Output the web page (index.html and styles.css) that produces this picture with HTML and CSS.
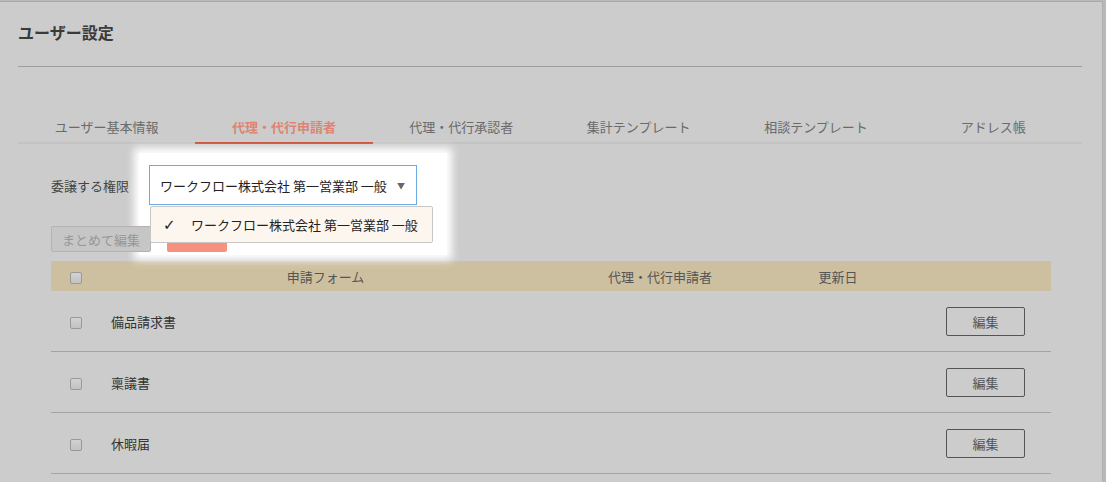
FILE: index.html
```html
<!DOCTYPE html>
<html lang="ja">
<head>
    <meta charset="UTF-8">
    <title>ユーザー設定</title>
    <link rel="stylesheet" href="styles.css">
</head>
<body>
    <div class="card">
        <h1 class="title">ユーザー設定</h1>
        <div class="tabs">
            <div class="tab">ユーザー基本情報</div>
            <div class="tab active">代理・代行申請者</div>
            <div class="tab">代理・代行承認者</div>
            <div class="tab">集計テンプレート</div>
            <div class="tab">相談テンプレート</div>
            <div class="tab">アドレス帳</div>
        </div>
        <div class="panel">
            <div class="spotlight"></div>
            <div class="form-row">
                <label class="label">委譲する権限</label>
                <div class="select-wrap">
                    <div class="select">
                        <span>ワークフロー株式会社 第一営業部 一般</span>
                        <span class="arrow">▼</span>
                    </div>
                    <div class="menu">
                        <div class="option"><span class="check">✓</span>ワークフロー株式会社 第一営業部 一般</div>
                    </div>
                </div>
            </div>
            <div class="actions">
                <button class="btn btn-bulk">まとめて編集</button>
                <button class="btn btn-add"></button>
            </div>
            <table class="list">
                <thead>
                    <tr>
                        <th class="col-check"><span class="checkbox"></span></th>
                        <th class="col-name">申請フォーム</th>
                        <th class="col-proxy">代理・代行申請者</th>
                        <th class="col-date">更新日</th>
                        <th class="col-edit"></th>
                    </tr>
                </thead>
                <tbody>
                    <tr>
                        <td class="col-check"><span class="checkbox"></span></td>
                        <td class="name">備品請求書</td>
                        <td></td>
                        <td></td>
                        <td class="col-edit"><button class="edit">編集</button></td>
                    </tr>
                    <tr>
                        <td class="col-check"><span class="checkbox"></span></td>
                        <td class="name">稟議書</td>
                        <td></td>
                        <td></td>
                        <td class="col-edit"><button class="edit">編集</button></td>
                    </tr>
                    <tr>
                        <td class="col-check"><span class="checkbox"></span></td>
                        <td class="name">休暇届</td>
                        <td></td>
                        <td></td>
                        <td class="col-edit"><button class="edit">編集</button></td>
                    </tr>
                </tbody>
            </table>
        </div>
    </div>
</body>
</html>
```

FILE: styles.css
```css
body {
    margin: 0;
    background: #b8b8b8;
    font-family: "Noto Sans CJK JP", "Noto Sans", sans-serif;
    font-size: 13px;
    color: #333;
    overflow: hidden;
}
.card {
    width: 1103px;
    height: 482px;
    margin-top: 1px;
    background: #cccccc;
    border-top: 1px solid #a9a9a9;
    border-right: 1px solid #b0b0b0;
    padding: 0 20px 0 18px;
    box-sizing: border-box;
}
.title {
    margin: 0;
    height: 65px;
    padding-top: 18px;
    box-sizing: border-box;
    font-size: 16px;
    line-height: 24px;
    font-weight: bold;
    color: #3a3a3a;
    border-bottom: 1px solid #9e9e9e;
}
.tabs {
    display: flex;
    margin-top: 44px;
    border-bottom: 2px solid #c3c3c3;
}
.tab {
    flex: 1;
    text-align: center;
    line-height: 31px;
    color: #6a6a6a;
    margin-bottom: -2px;
    border-bottom: 2px solid transparent;
}
.tab.active {
    color: #dd8473;
    font-weight: bold;
    border-bottom-color: #c9472f;
}
.panel {
    position: relative;
    padding: 21px 32px 0 33px;
}
.spotlight {
    position: absolute;
    left: 121px;
    top: 9px;
    width: 308px;
    height: 102px;
    background: #fff;
    box-shadow: 0 0 8px 5px #fff;
}
.form-row {
    position: relative;
    display: flex;
    align-items: center;
}
.label {
    width: 98px;
    color: #444;
}
.select-wrap {
    position: relative;
    z-index: 2;
}
.select {
    display: flex;
    align-items: center;
    justify-content: space-between;
    width: 268px;
    height: 40px;
    padding: 0 11px 0 10px;
    box-sizing: border-box;
    border: 1px solid #6ea9e0;
    background: #fff;
    color: #222;
}
.arrow {
    font-size: 8px;
    color: #666;
}
.menu {
    position: absolute;
    left: 1px;
    top: 41px;
    width: 283px;
    background: #fdf6ef;
    border: 1px solid #c6c6c6;
    border-radius: 2px;
    box-sizing: border-box;
}
.option {
    height: 35px;
    display: flex;
    align-items: center;
    padding-left: 12px;
    color: #222;
}
.check {
    width: 28px;
    font-family: "DejaVu Sans", sans-serif;
    font-weight: bold;
    font-size: 15px;
}
.actions {
    position: relative;
    z-index: 1;
    display: flex;
    gap: 16px;
    margin-top: 21px;
    height: 26px;
}
.btn {
    font-family: inherit;
    font-size: 13px;
    border-radius: 2px;
    padding: 0;
    height: 26px;
}
.btn-bulk {
    width: 100px;
    background: #c6c6c6;
    border: 1px solid #b3b3b3;
    color: #979797;
}
.btn-add {
    width: 60px;
    background: #f7917e;
    border: none;
}
.list {
    width: 1000px;
    margin-top: 9px;
    border-collapse: collapse;
    table-layout: fixed;
}
.list th {
    height: 30px;
    padding: 0;
    background: #cdc0a0;
    font-weight: normal;
    color: #555;
    text-align: center;
}
.list td {
    height: 60px;
    padding: 0;
    border-bottom: 1px solid #a3a3a3;
}
.col-check {
    width: 50px;
    text-align: center;
}
.col-name {
    width: 449px;
}
.col-proxy {
    width: 220px;
}
.col-date {
    width: 136px;
}
.col-edit {
    width: 145px;
    text-align: right;
}
.list td.col-check {
    text-align: center;
}
.list td.col-edit {
    padding-right: 26px;
}
.checkbox {
    display: inline-block;
    width: 10px;
    height: 10px;
    margin-left: -1px;
    border: 1px solid #999;
    border-radius: 2px;
    background: linear-gradient(#d2d2d2, #c2c2c2);
    vertical-align: middle;
}
.name {
    padding-left: 10px !important;
    color: #333;
}
.edit {
    width: 79px;
    height: 29px;
    background: #cccccc;
    border: 1px solid #555;
    border-radius: 2px;
    font-family: inherit;
    font-size: 13px;
    color: #555;
}
```
